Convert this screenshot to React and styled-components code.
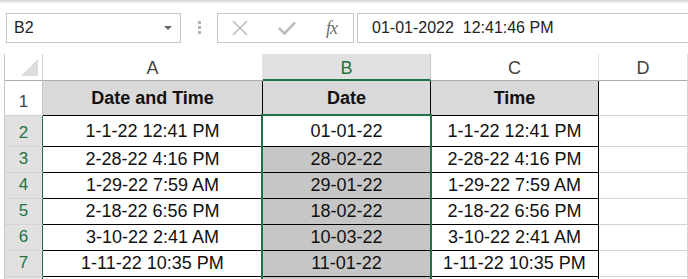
import React from "react";
import styled, { createGlobalStyle } from "styled-components";

const GREEN = "#217346";

const GlobalStyle = createGlobalStyle`
  html, body {
    margin: 0;
    background: #fff;
    overflow: hidden;
    font-family: "Liberation Sans", Arial, sans-serif;
  }
`;

const Toolbar = styled.div`
  height: 43px;
  box-sizing: border-box;
  padding: 13px 0 0 6px;
  display: flex;
  background: linear-gradient(#cfcfcf 0px, #ececec 2px, #fff 4px);
`;

const Box = styled.div`
  height: 30px;
  box-sizing: border-box;
  border: 1px solid #c6c6c6;
  display: flex;
  align-items: center;
`;

const NameBox = styled(Box)`
  width: 175px;
  padding: 0 8px 0 7px;
  justify-content: space-between;
  font-size: 16px;
  color: #222;
`;

const Caret = styled.span`
  width: 0;
  height: 0;
  border-left: 4px solid transparent;
  border-right: 4px solid transparent;
  border-top: 4px solid #6b6b6b;
`;

const Grip = styled.div`
  width: 36px;
  display: flex;
  flex-direction: column;
  align-items: center;
  justify-content: center;
  gap: 2px;
  padding-bottom: 2px;

  span {
    width: 3px;
    height: 3px;
    background: #b3b3b3;
  }
`;

const FxButtons = styled(Box)`
  width: 137px;
  padding: 0 14px 0 14px;
  justify-content: space-between;
`;

const FxLabel = styled.span`
  font-family: "Liberation Serif", "Times New Roman", serif;
  font-style: italic;
  font-size: 18px;
  color: #6e6e6e;
  letter-spacing: -1px;
  margin-right: 2px;
`;

const FormulaInput = styled(Box)`
  flex: 1;
  margin-left: 3px;
  border-right: none;
  padding-left: 14px;
  font-size: 16px;
  color: #222;
  white-space: pre;
`;

const Sheet = styled.div`
  margin-top: 11px;
  margin-left: 4px;
  border-left: 1px solid #c6c6c6;
  display: grid;
  grid-template-columns: 38px 220px 168px 168px 1fr;
  grid-template-rows: 27px 35px 31px 26px 26px 26px 26px 26px 26px;
`;

const ColHead = styled.div`
  grid-row: 1;
  grid-column: ${(p) => p.$col};
  display: flex;
  align-items: center;
  justify-content: center;
  padding-top: 3px;
  box-sizing: border-box;
  font-size: 18px;
  color: ${(p) => (p.$active ? GREEN : "#444")};
  background: ${(p) => (p.$active ? "#e1e1e1" : "#fff")};
  border-right: 1px solid ${(p) => (p.$active ? "#c6c6c6" : "#e1e1e1")};
  border-bottom: ${(p) => (p.$active ? `2px solid ${GREEN}` : "1px solid #ababab")};
`;

const Corner = styled.div`
  grid-area: 1 / 1;
  position: relative;
  background: #fff;
  border-right: 1px solid #d4d4d4;
  border-bottom: 1px solid #ababab;

  &::after {
    content: "";
    position: absolute;
    right: 4px;
    bottom: 4px;
    border-left: 17px solid transparent;
    border-bottom: 17px solid #dcdcdc;
  }
`;

const RowHead = styled.div`
  grid-column: 1;
  grid-row: ${(p) => p.$row};
  display: flex;
  align-items: flex-end;
  justify-content: center;
  padding-bottom: 3px;
  box-sizing: border-box;
  font-size: 17px;
  color: ${(p) => (p.$active ? GREEN : "#444")};
  background: ${(p) => (p.$active ? "#e1e1e1" : "#fff")};
  border-bottom: 1px solid #d4d4d4;
  border-right: ${(p) => (p.$active ? `2px solid ${GREEN}` : "1px solid #c6c6c6")};
  margin-right: ${(p) => (p.$active ? "-1px" : "0")};
`;

const Cell = styled.div`
  grid-row: ${(p) => p.$row};
  grid-column: ${(p) => p.$col};
  display: flex;
  align-items: center;
  justify-content: center;
  font-size: 18px;
  color: #111;
  white-space: nowrap;
  font-weight: ${(p) => (p.$head ? 700 : 400)};
  background: ${(p) => (p.$head ? "#d9d9d9" : p.$shade ? "#c6c6c6" : "#fff")};
  border-right: 1px solid ${(p) => (p.$empty ? "#d4d4d4" : "#000")};
  border-bottom: 1px solid ${(p) => (p.$empty ? "#d4d4d4" : "#000")};
`;

const Selection = styled.div`
  grid-column: 3;
  grid-row: 3 / -1;
  margin: -2px -1px -4px -2px;
  border: 2px solid ${GREEN};
  border-bottom: none;
  pointer-events: none;
  z-index: 1;
`;

const rows = [
  ["1-1-22 12:41 PM", "01-01-22"],
  ["2-28-22 4:16 PM", "28-02-22"],
  ["1-29-22 7:59 AM", "29-01-22"],
  ["2-18-22 6:56 PM", "18-02-22"],
  ["3-10-22 2:41 AM", "10-03-22"],
  ["1-11-22 10:35 PM", "11-01-22"],
];

const CrossIcon = () => (
  <svg width="16" height="16" viewBox="0 0 16 16">
    <path d="M1 1 L15 15 M15 1 L1 15" stroke="#bdbdbd" strokeWidth="1.6" fill="none" />
  </svg>
);

const CheckIcon = () => (
  <svg width="18" height="14" viewBox="0 0 18 14">
    <path d="M1 7 L6.5 12.5 L17 1.5" stroke="#bdbdbd" strokeWidth="2.6" fill="none" />
  </svg>
);

export default function App() {
  return (
    <>
      <GlobalStyle />
      <Toolbar>
        <NameBox>
          <span>B2</span>
          <Caret />
        </NameBox>
        <Grip>
          <span />
          <span />
          <span />
        </Grip>
        <FxButtons>
          <CrossIcon />
          <CheckIcon />
          <FxLabel>fx</FxLabel>
        </FxButtons>
        <FormulaInput>01-01-2022  12:41:46 PM</FormulaInput>
      </Toolbar>
      <Sheet>
        <Corner />
        <ColHead $col={2}>A</ColHead>
        <ColHead $col={3} $active>B</ColHead>
        <ColHead $col={4}>C</ColHead>
        <ColHead $col={5}>D</ColHead>

        <RowHead $row={2}>1</RowHead>
        <Cell $row={2} $col={2} $head>Date and Time</Cell>
        <Cell $row={2} $col={3} $head>Date</Cell>
        <Cell $row={2} $col={4} $head>Time</Cell>
        <Cell $row={2} $col={5} $empty />

        {rows.map(([dt, d], i) => {
          const r = i + 3;
          return (
            <React.Fragment key={i}>
              <RowHead $row={r} $active>{i + 2}</RowHead>
              <Cell $row={r} $col={2}>{dt}</Cell>
              <Cell $row={r} $col={3} $shade={i > 0}>{d}</Cell>
              <Cell $row={r} $col={4}>{dt}</Cell>
              <Cell $row={r} $col={5} $empty />
            </React.Fragment>
          );
        })}

        {/* row 8 only peeks in at the bottom edge */}
        <RowHead $row={9} $active />
        <Cell $row={9} $col={2} />
        <Cell $row={9} $col={3} $shade />
        <Cell $row={9} $col={4} />
        <Cell $row={9} $col={5} $empty />
        <Selection />
      </Sheet>
    </>
  );
}
